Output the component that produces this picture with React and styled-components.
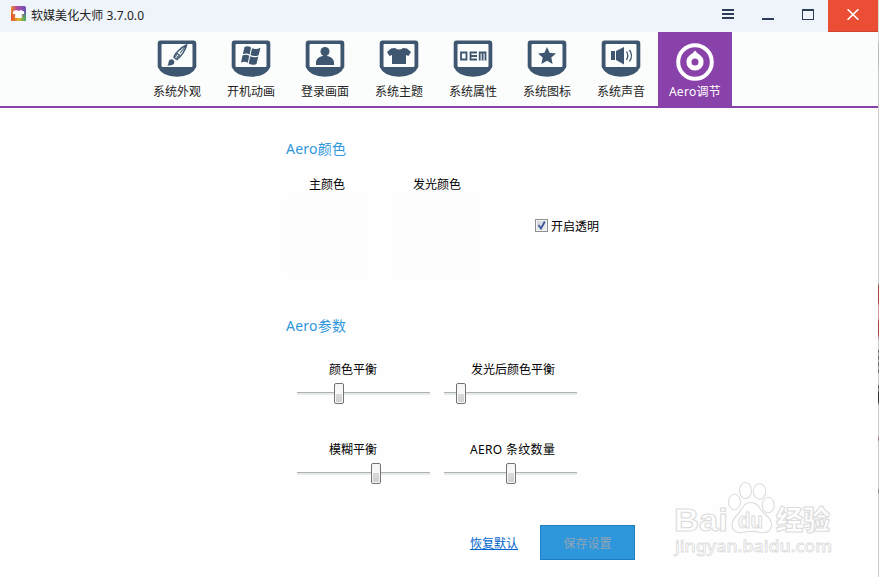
import React from "react";
import styled, { createGlobalStyle } from "styled-components";

const GlobalStyle = createGlobalStyle`
  body {
    margin: 0;
    overflow: hidden;
    background: #fff;
    font-family: "Noto Sans", "Noto Sans CJK SC", sans-serif;
    font-size: 12px;
    color: #000;
  }
`
const Window = styled.div`
  position: relative;
  display: grid;
  grid-template-columns: 878px 1px;
  width: 879px;
  height: 577px;
  overflow: hidden;
`
const Page = styled.div`
  display: flex;
  flex-direction: column;
  background: #fefefe;
`
const Edge = styled.div`
  background: linear-gradient(
    #d9d9d3 0 40px, #b9b9b5 44px 62px, #c9c9c6 70px 283px,
    #a8433d 286px 302px, #d49b98 306px 318px, #a8433d 322px 334px, #c9c9c9 340px 349px,
    #555 351px, #bbb 354px, #555 358px, #bbb 361px, #555 364px, #bbb 368px, #555 371px, #c9c9c9 374px 384px,
    #444 387px, #999 390px, #333 393px 402px, #c9c9c9 405px 436px,
    #a06060 439px, #c9c9c9 442px 488px, #777 491px, #c9c9c9 494px
  );
`
const TitleBar = styled.header`
  display: flex;
  align-items: center;
  height: 32px;
  background: #eef4f9;
`
const Title = styled.span`
  flex: 1;
  margin-left: 5px;
  line-height: 28px;
  padding-bottom: 1px;
  letter-spacing: 0.06px;
  color: #222;
  white-space: nowrap;
`
const Logo = styled.svg`
  margin: 0 0 5px 11px;
`
const WindowButton = styled.button`
  display: flex;
  align-items: center;
  justify-content: center;
  box-sizing: border-box;
  width: ${props => props.$width || "40px"};
  height: 32px;
  padding: 0 0 3px;
  border: 0;
  border-bottom: ${props => props.$close ? "1px solid #cf4630" : "0"};
  background: ${props => props.$close ? "#eb4d35" : "transparent"};
`
const TabBar = styled.nav`
  display: flex;
  height: 74px;
  padding-left: 140px;
  border-bottom: 2px solid #8a42ab;
  background: #fbfdfc;
`
const Tab = styled.div`
  display: flex;
  flex-direction: column;
  align-items: center;
  width: 74px;
  padding-top: 8px;
  box-sizing: border-box;
  background: ${props => props.$active ? "#8a42ab" : "transparent"};
  color: ${props => props.$active ? "#fff" : "#222"};

  svg {
    flex: none;
    margin-top: ${props => props.$active ? "3px" : "0"};
    margin-bottom: ${props => props.$active ? "2px" : "6px"};
  }
`
const TabLabel = styled.span`
  line-height: 18px;
  letter-spacing: ${props => props.$active ? "0.3px" : "0"};
  white-space: nowrap;
`
const Content = styled.main`
  display: flex;
  flex-direction: column;
  padding: 31px 0 0 286px;
`
const Heading = styled.h2`
  margin: 0;
  font-size: 14px;
  font-weight: 400;
  line-height: 20px;
  letter-spacing: 0.25px;
  color: #2e97dc;
`
const ColorRow = styled.div`
  display: flex;
  height: 140px;
  padding: 17px 0 0 1px;
  box-sizing: content-box;
`
const ColorItem = styled.div`
  display: flex;
  flex-direction: column;
  align-items: center;
  width: 80px;
  margin-right: 30px;
`
const Label = styled.div`
  line-height: 18px;
  white-space: nowrap;
`
const Swatch = styled.div`
  width: 80px;
  height: 79px;
  margin-top: 3px;
  background: #fdfdfd;
`
const CheckLabel = styled.div`
  display: flex;
  gap: 3px;
  height: 18px;
  margin: 42px 0 0 28px;
  line-height: 18px;
`
const CheckBox = styled.span`
  display: flex;
  width: 11px;
  height: 11px;
  margin-top: 1px;
  border: 1px solid #8e8f8f;
  background: linear-gradient(135deg, #cfd3da, #f4f4f4);
  box-shadow: inset 0 0 0 1px #f4f4f4;
`
const Sliders = styled.div`
  display: grid;
  grid-template-columns: 133px 133px;
  grid-auto-rows: 80px;
  column-gap: 14px;
  padding: 25px 0 0 11px;
  height: 164px;
  box-sizing: content-box;
`
const SliderLabel = styled(Label)`
  padding-left: ${props => props.$left};
  letter-spacing: ${props => props.$spacing || "0"};
`
const SliderRow = styled.div`
  display: flex;
  align-items: center;
  height: 21px;
  margin-top: 4px;
  background: linear-gradient(#aeb1b1 0 1px, #e7eaea 1px 3px) 0 9px / 100% 3px no-repeat;
`
const Thumb = styled.span`
  width: 8px;
  height: 19px;
  border: 1px solid #737373;
  border-radius: 2px;
  background: linear-gradient(#f7f7f7 0 50%, #dadada 50%, #cfcfcf);
  box-shadow: inset 0 0 0 1px #f6f6f6;
`
const Actions = styled.div`
  display: flex;
  align-items: center;
  gap: 22px;
  padding: 0 0 0 184px;
`
const ResetLink = styled.a`
  padding-top: 2px;
  line-height: 18px;
  color: #0066cc;
  text-decoration: underline;
`
const SaveButton = styled.button`
  width: 95px;
  height: 35px;
  padding: 0;
  border: 1px solid #1f7fc0;
  background: #2e97dc;
  color: #93a4b3;
  font: inherit;
`
const Watermark = styled.svg`
  position: absolute;
  left: 664px;
  top: 476px;
`

const Screen = ({ children }) => (
  <svg width="40" height="37" viewBox="0 0 40 37" fill="#3e566f">
    <path fillRule="evenodd" d="M3 .5H37Q39.300 .5 39.300 3V27Q35 36.700 20 36.700T.7 27V3Q.7 .5 3 .5ZM5.500 4Q4.500 4 4.500 5V26Q4.500 27 5.500 27H34.500Q35.500 27 35.500 26V5Q35.500 4 34.500 4Z" />
    {children}
  </svg>
)

const tabs = [
  {
    label: "系统外观",
    icon: <Screen>
      <path d="M17 17.500C17.500 13.500 24 7.500 29.500 5C28.500 10.500 23.500 17 20 19.500Z" fill="none" stroke="#3e566f" strokeWidth="1.500" />
      <path d="M28.500 6.500L23 13M18 17L20.500 13.500L22.500 15L19.500 18" fill="none" stroke="#3e566f" strokeWidth="1.100" />
      <path d="M10.500 25.500C12 23.500 11 21.500 12.500 20C14.500 18 18 20 17.300 22.800C16.500 25.500 13.500 25.500 10.500 25.500Z" />
    </Screen>,
  },
  {
    label: "开机动画",
    icon: <Screen>
      <path d="M13.500 7Q17 5.200 20 7.500L18.600 14.500Q15.500 12.800 11.800 14.200ZM21 8.200Q25 10 29.500 7.800L27.600 15.200Q23.500 17 19.600 15ZM11.500 15.400Q15 14 18.300 15.700L16.800 22.800Q13.700 20.800 10 22.500ZM19.300 16.200Q23.300 18.200 27.300 16.400L25.500 24Q21.500 25.800 17.700 23.500Z" />
    </Screen>,
  },
  {
    label: "登录画面",
    icon: <Screen>
      <circle cx="20" cy="11.500" r="4.500" />
      <path d="M11 25V22.500C11 18.500 14.500 16.800 18 16V14H22V16C25.500 16.800 29 18.500 29 22.500V25Z" />
    </Screen>,
  },
  {
    label: "系统主题",
    icon: <Screen>
      <path d="M16 8Q20 11 24 8L28 8.500L32 12L29.500 16L27 15V24H13V15L10.500 16L8 12L12 8.500Z" />
    </Screen>,
  },
  {
    label: "系统属性",
    icon: <Screen>
      <path d="M8 12.500H13.500V19.500H8ZM24 12.500H17.500V19.500H24M17.500 16H24M26.700 20.400V12.500H32.500V20.400M29.600 12.500V20.400" fill="none" stroke="#3e566f" strokeWidth="1.800" />
    </Screen>,
  },
  {
    label: "系统图标",
    icon: <Screen>
      <path d="M20 7L22.600 12.700L29 13.400L24.300 17.600L25.600 24L20 20.800L14.400 24L15.700 17.600L11 13.400L17.400 12.700Z" />
    </Screen>,
  },
  {
    label: "系统声音",
    icon: <Screen>
      <path d="M10 11H14V20H10ZM15 11L23 7V24.500L15 20Z" />
      <path d="M25.500 11.500Q28 15.500 25.500 20M28.500 10Q32.500 15.500 28.500 21.500" fill="none" stroke="#3e566f" strokeWidth="1.300" />
    </Screen>,
  },
  {
    label: "Aero调节",
    active: true,
    icon: <svg width="38" height="38" viewBox="0 0 38 38">
      <circle cx="19" cy="19" r="16.800" fill="none" stroke="#fff" strokeWidth="4" />
      <path fillRule="evenodd" fill="#fff" d="M19 7.500Q21 10.500 24 12A8.600 8.600 0 1 1 14 12Q17 10.500 19 7.500ZM19 15.500A3.500 3.500 0 1 0 19 22.500A3.500 3.500 0 1 0 19 15.500Z" />
    </svg>,
  },
]

const sliders = [
  { label: "颜色平衡", left: "32px", value: 37 },
  { label: "发光后颜色平衡", left: "27px", value: 12 },
  { label: "模糊平衡", left: "32px", value: 74 },
  { label: "AERO 条纹数量", left: "26px", value: 62, spacing: "0.33px" },
]

const App = () => {
  return (
    <>
      <GlobalStyle />
      <Window>
        <Page>
          <TitleBar>
            <Logo width="15" height="15" viewBox="0 0 15 15">
              <defs>
                <linearGradient id="logoTop"><stop offset="0" stopColor="#f08a24" /><stop offset=".4" stopColor="#b04a9a" /><stop offset="1" stopColor="#6a50b8" /></linearGradient>
                <linearGradient id="logoBottom"><stop offset="0" stopColor="#e5452c" /><stop offset=".5" stopColor="#e3b72c" /><stop offset="1" stopColor="#39a96b" /></linearGradient>
                <linearGradient id="logoFade" x2="0" y2="1"><stop offset=".3" stopColor="#000" /><stop offset=".8" stopColor="#fff" /></linearGradient>
                <mask id="logoMask"><rect width="15" height="15" fill="url(#logoFade)" /></mask>
              </defs>
              <rect width="15" height="15" rx="1.500" fill="url(#logoTop)" />
              <rect width="15" height="15" rx="1.500" fill="url(#logoBottom)" mask="url(#logoMask)" />
              <path d="M5 4Q7.500 5.500 10 4L13 5.500V8H10.800V12H4.200V8H2V5.500Z" fill="#fff" />
            </Logo>
            <Title>软媒美化大师 3.7.0.0</Title>
            <WindowButton>
              <svg width="12" height="11"><path d="M0 1H12M0 5H12M0 9H12" stroke="#2c3e57" strokeWidth="2" /></svg>
            </WindowButton>
            <WindowButton>
              <svg width="12" height="11"><path d="M0 10H12" stroke="#2c3e57" strokeWidth="2" /></svg>
            </WindowButton>
            <WindowButton>
              <svg width="12" height="11"><path fillRule="evenodd" d="M0 0H12V11H0ZM1 2V10H11V2Z" fill="#2c3e57" /></svg>
            </WindowButton>
            <WindowButton $close $width="50px">
              <svg width="12" height="11"><path d="M.5 .2L11.500 10.800M11.500 .2L.5 10.800" stroke="#fff" strokeWidth="1.600" /></svg>
            </WindowButton>
          </TitleBar>
          <TabBar>
            {tabs.map(tab => (
              <Tab key={tab.label} $active={tab.active}>
                {tab.icon}
                <TabLabel $active={tab.active}>{tab.label}</TabLabel>
              </Tab>
            ))}
          </TabBar>
          <Content>
            <Heading>Aero颜色</Heading>
            <ColorRow>
              <ColorItem><Label>主颜色</Label><Swatch /></ColorItem>
              <ColorItem><Label>发光颜色</Label><Swatch /></ColorItem>
              <CheckLabel>
                <CheckBox>
                  <svg width="11" height="11"><path d="M2.500 5L5 8.500L8.800 1.500" fill="none" stroke="#42589c" strokeWidth="1.900" /></svg>
                </CheckBox>
                开启透明
              </CheckLabel>
            </ColorRow>
            <Heading>Aero参数</Heading>
            <Sliders>
              {sliders.map(slider => (
                <div key={slider.label}>
                  <SliderLabel $left={slider.left} $spacing={slider.spacing}>{slider.label}</SliderLabel>
                  <SliderRow><Thumb style={{ marginLeft: slider.value }} /></SliderRow>
                </div>
              ))}
            </Sliders>
            <Actions>
              <ResetLink>恢复默认</ResetLink>
              <SaveButton>保存设置</SaveButton>
            </Actions>
          </Content>
        </Page>
        <Edge />
        <Watermark width="180" height="90" fill="#fff" stroke="#dcdcdc" strokeWidth="1.100" fontFamily='"Liberation Sans", sans-serif'>
          <text x="10" y="54.500" fontSize="32" fontWeight="700" textLength="54" lengthAdjust="spacingAndGlyphs">Bai</text>
          <ellipse cx="70.500" cy="26" rx="6" ry="7.800" />
          <ellipse cx="81.500" cy="14.500" rx="6" ry="8" />
          <ellipse cx="95.500" cy="15.500" rx="6.200" ry="7.800" />
          <ellipse cx="104.200" cy="29" rx="6" ry="7.800" />
          <path d="M87 26.500C95 26.500 96 35 102 39C112 48 107 58 97 56.500C91 55 85 55 78 56.500C67 57.500 65 47 73 39C78 35 79 26.500 87 26.500Z" />
          <text x="74" y="51.500" fontSize="22" fontWeight="700" textLength="25" lengthAdjust="spacingAndGlyphs">du</text>
          <text x="112" y="53.500" fontSize="27" fontWeight="900" fontFamily='"Noto Sans CJK SC", sans-serif'>经验</text>
          <text x="11" y="76" fontSize="17" fontFamily='"Noto Sans", sans-serif' fontWeight="500" strokeWidth=".8" textLength="157" lengthAdjust="spacingAndGlyphs">jingyan.baidu.com</text>
        </Watermark>
      </Window>
    </>
  );
};

export default App;
